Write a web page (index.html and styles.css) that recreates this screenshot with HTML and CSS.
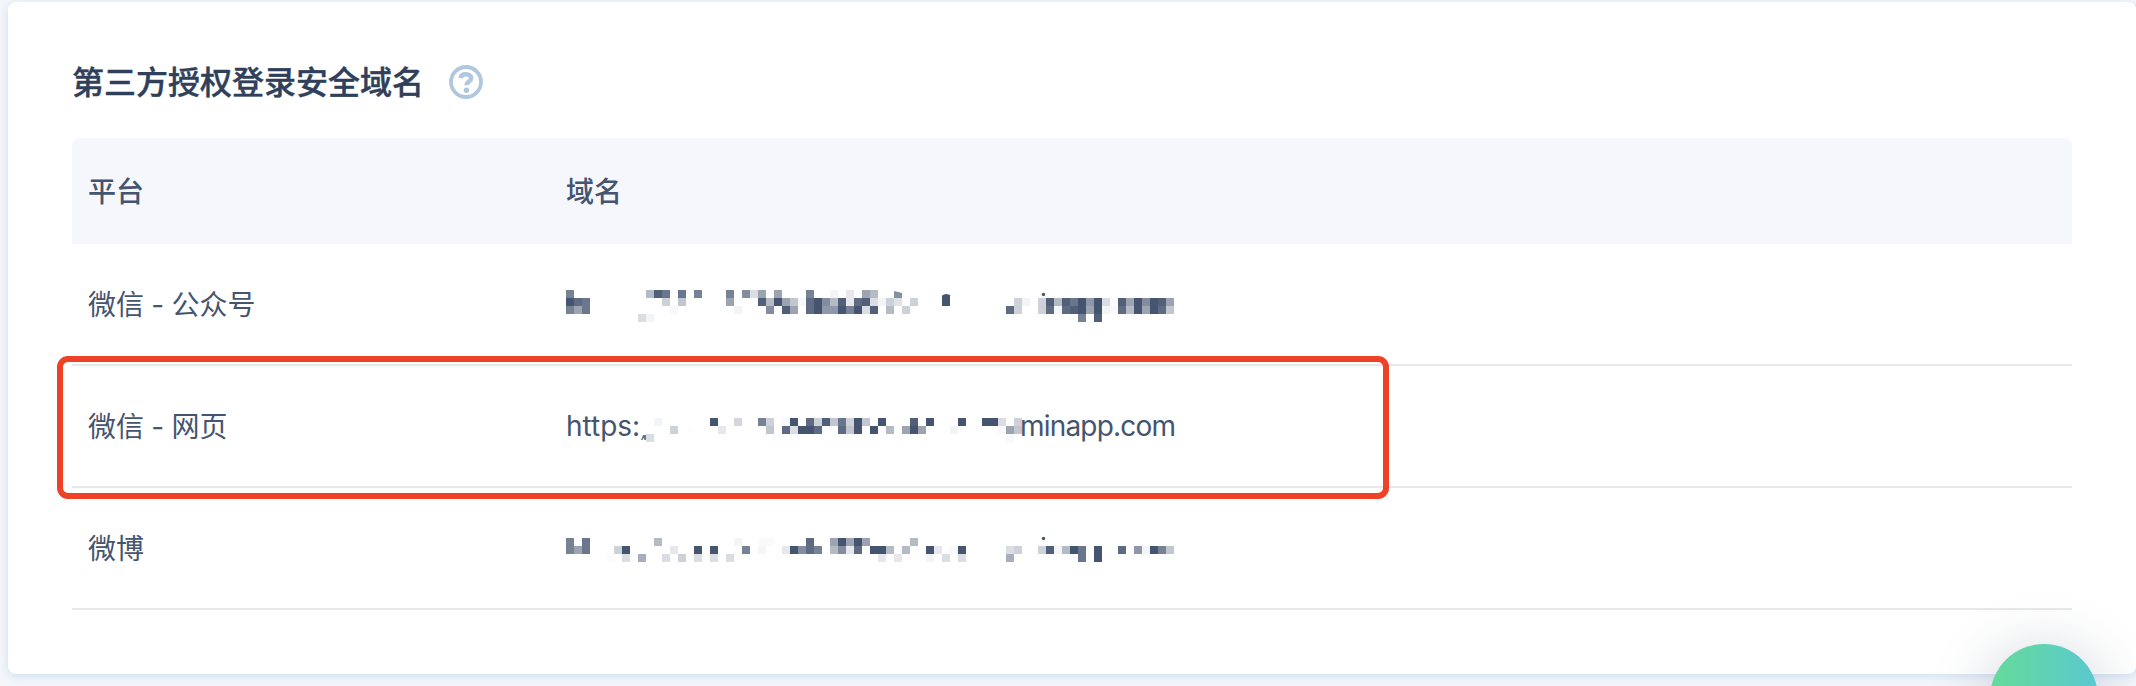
FILE: index.html
```html
<!DOCTYPE html>
<html lang="zh-CN">
<head>
<meta charset="utf-8">
<title>第三方授权登录安全域名</title>
<link rel="stylesheet" href="styles.css">
</head>
<body>
<div class="page">
<main class="card">
  <header class="card-head">
    <h1 class="title">第三方授权登录安全域名</h1>
    <svg class="help" viewBox="0 0 34 34" aria-hidden="true">
      <circle cx="17" cy="17" r="15" fill="none" stroke-width="3.8"/>
      <path d="M11.700 13.200C11.900 10.600 14 9.300 17 9.300c3 0 5.100 1.500 5.100 3.900 0 3.400-4.700 3.500-4.700 7.100" fill="none" stroke-width="4.500"/>
      <circle class="help-dot" cx="17.400" cy="25.200" r="2.700"/>
    </svg>
  </header>
  <section class="table">
    <div class="row row-head"><div class="platform">平台</div><div class="domain">域名</div></div>
    <div class="row">
      <div class="platform">微信 - 公众号</div>
      <div class="domain"><svg class="mosaic" id="m1" width="608" height="36">
        <path d="M328 5l8 2v5h-8z" fill-opacity=".65"/><path d="M376 12v-2.500q4-3 9 0H384V12z"/><circle cx="477.500" cy="8.500" r="1.700"/>
      </svg></div>
    </div>
    <div class="row">
      <div class="platform">微信 - 网页</div>
      <div class="domain"><span class="scheme">https:</span><svg class="mosaic" id="m2" width="384" height="36">
        <path d="M5 27h3v5H6.500l-.8-2-1.200 2H3z" fill-opacity=".8"/>
      </svg><span class="host">minapp.com</span></div>
    </div>
    <div class="row">
      <div class="platform">微博</div>
      <div class="domain"><svg class="mosaic" id="m3" width="608" height="36">
        <circle cx="477.500" cy="8.500" r="1.700"/>
      </svg></div>
    </div>
    <div class="highlight"></div>
  </section>
</main>
<div class="fab"></div>
</div>
<script src="mosaic.js"></script>
</body>
</html>
```
FILE: styles.css
```css
* { box-sizing: border-box; }
body { margin: 0; }
.page {
  height: 686px;
  padding: 2px 0 12px 8px;
  overflow: hidden;
  position: relative;
  background: #f4f6fb;
  color: #45546f;
  font-family: Inter, "Noto Sans CJK SC", sans-serif;
}
.card {
  height: 672px;
  padding: 0 64px;
  border-radius: 8px;
  background: #fff;
  box-shadow: 0 2px 10px rgba(184, 209, 232, .65);
}
.card-head {
  height: 136px;
  padding-top: 57px;
  display: flex;
  align-items: flex-start;
  gap: 25px;
}
.title {
  margin: 0;
  font-size: 32px;
  line-height: 48px;
  font-weight: 500;
  color: #30405a;
  white-space: nowrap;
  -webkit-text-stroke: .4px #30405a;
}
.help { width: 34px; height: 34px; margin-top: 6px; stroke: #afc8e0; }
.help-dot { fill: #afc8e0; stroke: none; }
.table { position: relative; font-size: 28px; line-height: 40px; }
.row {
  display: grid;
  grid-template-columns: 478px 1fr;
  align-items: center;
  height: 122px;
  padding-left: 16px;
  border-bottom: 2px solid #e8e8e8;
}
.row-head {
  height: 106px;
  padding-top: 2px;
  border: 0;
  border-radius: 8px 8px 0 0;
  background: #f5f7fc;
  font-weight: 500;
}
.platform { padding-top: 2px; word-spacing: -.6px; }
.row-head .platform { padding-top: 0; }
.domain { display: flex; align-items: center; white-space: nowrap; }
.mosaic { display: block; flex: none; fill: #45546f; }
.scheme { width: 72px; }
.host { margin-left: -2px; letter-spacing: -.8px; }
.highlight {
  position: absolute;
  left: -15px;
  top: 218px;
  width: 1332px;
  height: 143px;
  border: 6px solid #ee4126;
  border-radius: 11px;
}
.fab {
  position: absolute;
  left: 1990px;
  top: 644px;
  width: 108px;
  height: 108px;
  border-radius: 50%;
  background: linear-gradient(90deg, #66db99, #5ac8d0);
  box-shadow: 0 8px 60px rgba(48, 64, 90, .25);
}
```
FILE: mosaic.js
```js
// Each line is one strip of 8px cells, written as column:opacity (in fifteenths).
const masks = {
  m1: { top: 4, from: 0, lines: [
    "0:11 10:6 11:14 12:12 14:12 16:11 20:11 22:10 23:3 24:8 26:8 30:11 33:1 35:2 37:8 38:6",
    "0:15 1:13 2:12 12:4 14:5 20:8 24:14 25:6 26:15 27:8 28:5 29:.6 30:13 31:15 32:10 33:6 34:14 35:2 36:13 37:14 38:3 39:1 40:4 41:2.500 43:4 47:15 56:4 57:1 59:4 60:14 61:6 62:14 63:12 64:15 65:9 66:15 67:3 69:14 70:8 71:15 72:10 73:15 74:14 75:8",
    "0:11 1:8 2:12 13:.6 19:.2 21:1 25:10 26:.2 27:14 28:8 30:13 31:15 32:9 33:9 34:15 35:11 36:15 37:3 38:14 40:6 42:4 46:.2 55:13 56:4 59:4 60:13 61:.8 62:13 63:14 64:15 65:8 66:15 67:1 68:.5 69:13 70:6 71:15 72:8 73:15 74:13 75:5",
    "9:3 10:1 64:11 66:14"
  ] },
  m2: { top: 10, from: 9, lines: [
    "11:1 18:15 21:3.500 24:11 25:4 27:.5 28:15 30:13 31:4 32:14 33:5 34:12 35:4 36:15 37:5 39:15 43:14 45:15 49:15 52:15 53:15 54:3 56:4",
    "13:4 15:.2 19:2 25:5 27:13 28:3 29:15 30:15 31:13 34:13 35:5 36:15 38:15 40:6 42:8 43:15 44:8 48:1 54:.5 55:8 56:5",
    "10:3 55:.5"
  ] },
  m3: { top: 8, from: 0, lines: [
    "0:11 2:12 11:6 21:1 24:.4 25:.4 30:13 33:8 34:15 35:8 36:15 37:8 43:6",
    "0:11 1:8 2:12 6:4 7:15 13:2 16:15 18:15 22:11 24:.8 27:2 28:15 29:10 30:13 31:11 33:6 34:10 35:2 36:13 38:15 39:15 40:6 42:6 45:15 46:2 48:.5 49:15 55:3 56:4 59:4 60:14 61:1 62:6 63:15 64:12 66:15 69:13 71:9 72:1 73:15 74:11 75:5",
    "5:.3 7:3 9:7 12:3 14:4 16:3 18:3 20:3 26:.2 39:2 41:2 45:1 47:3 49:3 55:7 64:12 66:15 67:.2"
  ] }
};
for (const [id, mask] of Object.entries(masks)) {
  const svg = document.getElementById(id);
  mask.lines.forEach((line, i) => line.split(" ").forEach(cell => {
    const [col, level] = cell.split(":").map(Number);
    const r = document.createElementNS("http://www.w3.org/2000/svg", "rect");
    r.setAttribute("x", (col - mask.from) * 8);
    r.setAttribute("y", mask.top + i * 8);
    r.setAttribute("width", 8);
    r.setAttribute("height", 8);
    r.setAttribute("fill-opacity", level / 15);
    svg.appendChild(r);
  }));
}
```
